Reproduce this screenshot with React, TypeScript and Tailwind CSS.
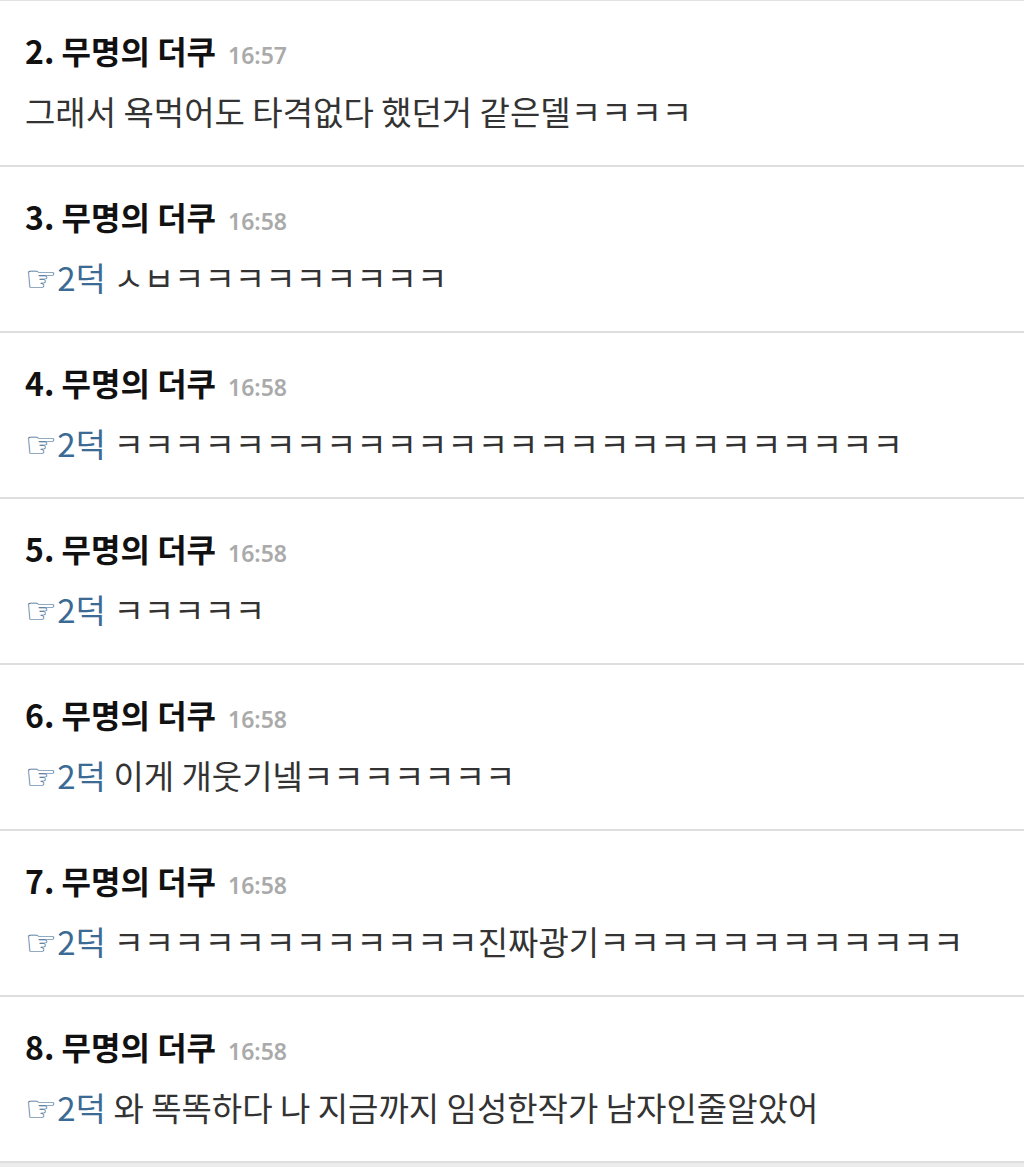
const COMMENTS = [
  { no: 2, time: "16:57", reply: false, text: "그래서 욕먹어도 타격없다 했던거 같은델ㅋㅋㅋㅋ" },
  { no: 3, time: "16:58", reply: true, text: "ㅅㅂㅋㅋㅋㅋㅋㅋㅋㅋㅋ" },
  { no: 4, time: "16:58", reply: true, text: "ㅋㅋㅋㅋㅋㅋㅋㅋㅋㅋㅋㅋㅋㅋㅋㅋㅋㅋㅋㅋㅋㅋㅋㅋㅋㅋ" },
  { no: 5, time: "16:58", reply: true, text: "ㅋㅋㅋㅋㅋ" },
  { no: 6, time: "16:58", reply: true, text: "이게 개웃기넼ㅋㅋㅋㅋㅋㅋㅋ" },
  { no: 7, time: "16:58", reply: true, text: "ㅋㅋㅋㅋㅋㅋㅋㅋㅋㅋㅋㅋ진짜광기ㅋㅋㅋㅋㅋㅋㅋㅋㅋㅋㅋㅋ" },
  { no: 8, time: "16:58", reply: true, text: "와 똑똑하다 나 지금까지 임성한작가 남자인줄알았어" },
];

export default function App() {
  return (
    <div className="w-[1024px] bg-white font-['Noto_Sans_CJK_KR','Noto_Sans',sans-serif]">
      <ul className="border-t border-[#e2e2e2]">
        {COMMENTS.map((c) => (
          <li
            key={c.no}
            className="flex flex-col gap-[16px] border-b-2 border-[#dedede] px-[25px] pb-[31px] pt-[27px]"
          >
            <div className="h-[45px] whitespace-nowrap leading-[45px]">
              <span className="text-[32px] font-bold text-[#111]">
                {c.no}. 무명의 더쿠
              </span>
              <span className="ml-[12px] font-['Noto_Sans',sans-serif] text-[23px] font-semibold text-[#aaaaaa]">
                {c.time}
              </span>
            </div>
            <p className="h-[45px] whitespace-nowrap text-[33px] leading-[45px] text-[#333]">
              {c.reply && (
                <span className="text-[#3b6a94]">
                  <span className="font-['DejaVu_Sans',sans-serif] text-[36px]">☞</span>2덕{" "}
                </span>
              )}
              {c.text}
            </p>
          </li>
        ))}
      </ul>
      <div className="h-[6px] bg-[#ececec]" />
    </div>
  );
}
